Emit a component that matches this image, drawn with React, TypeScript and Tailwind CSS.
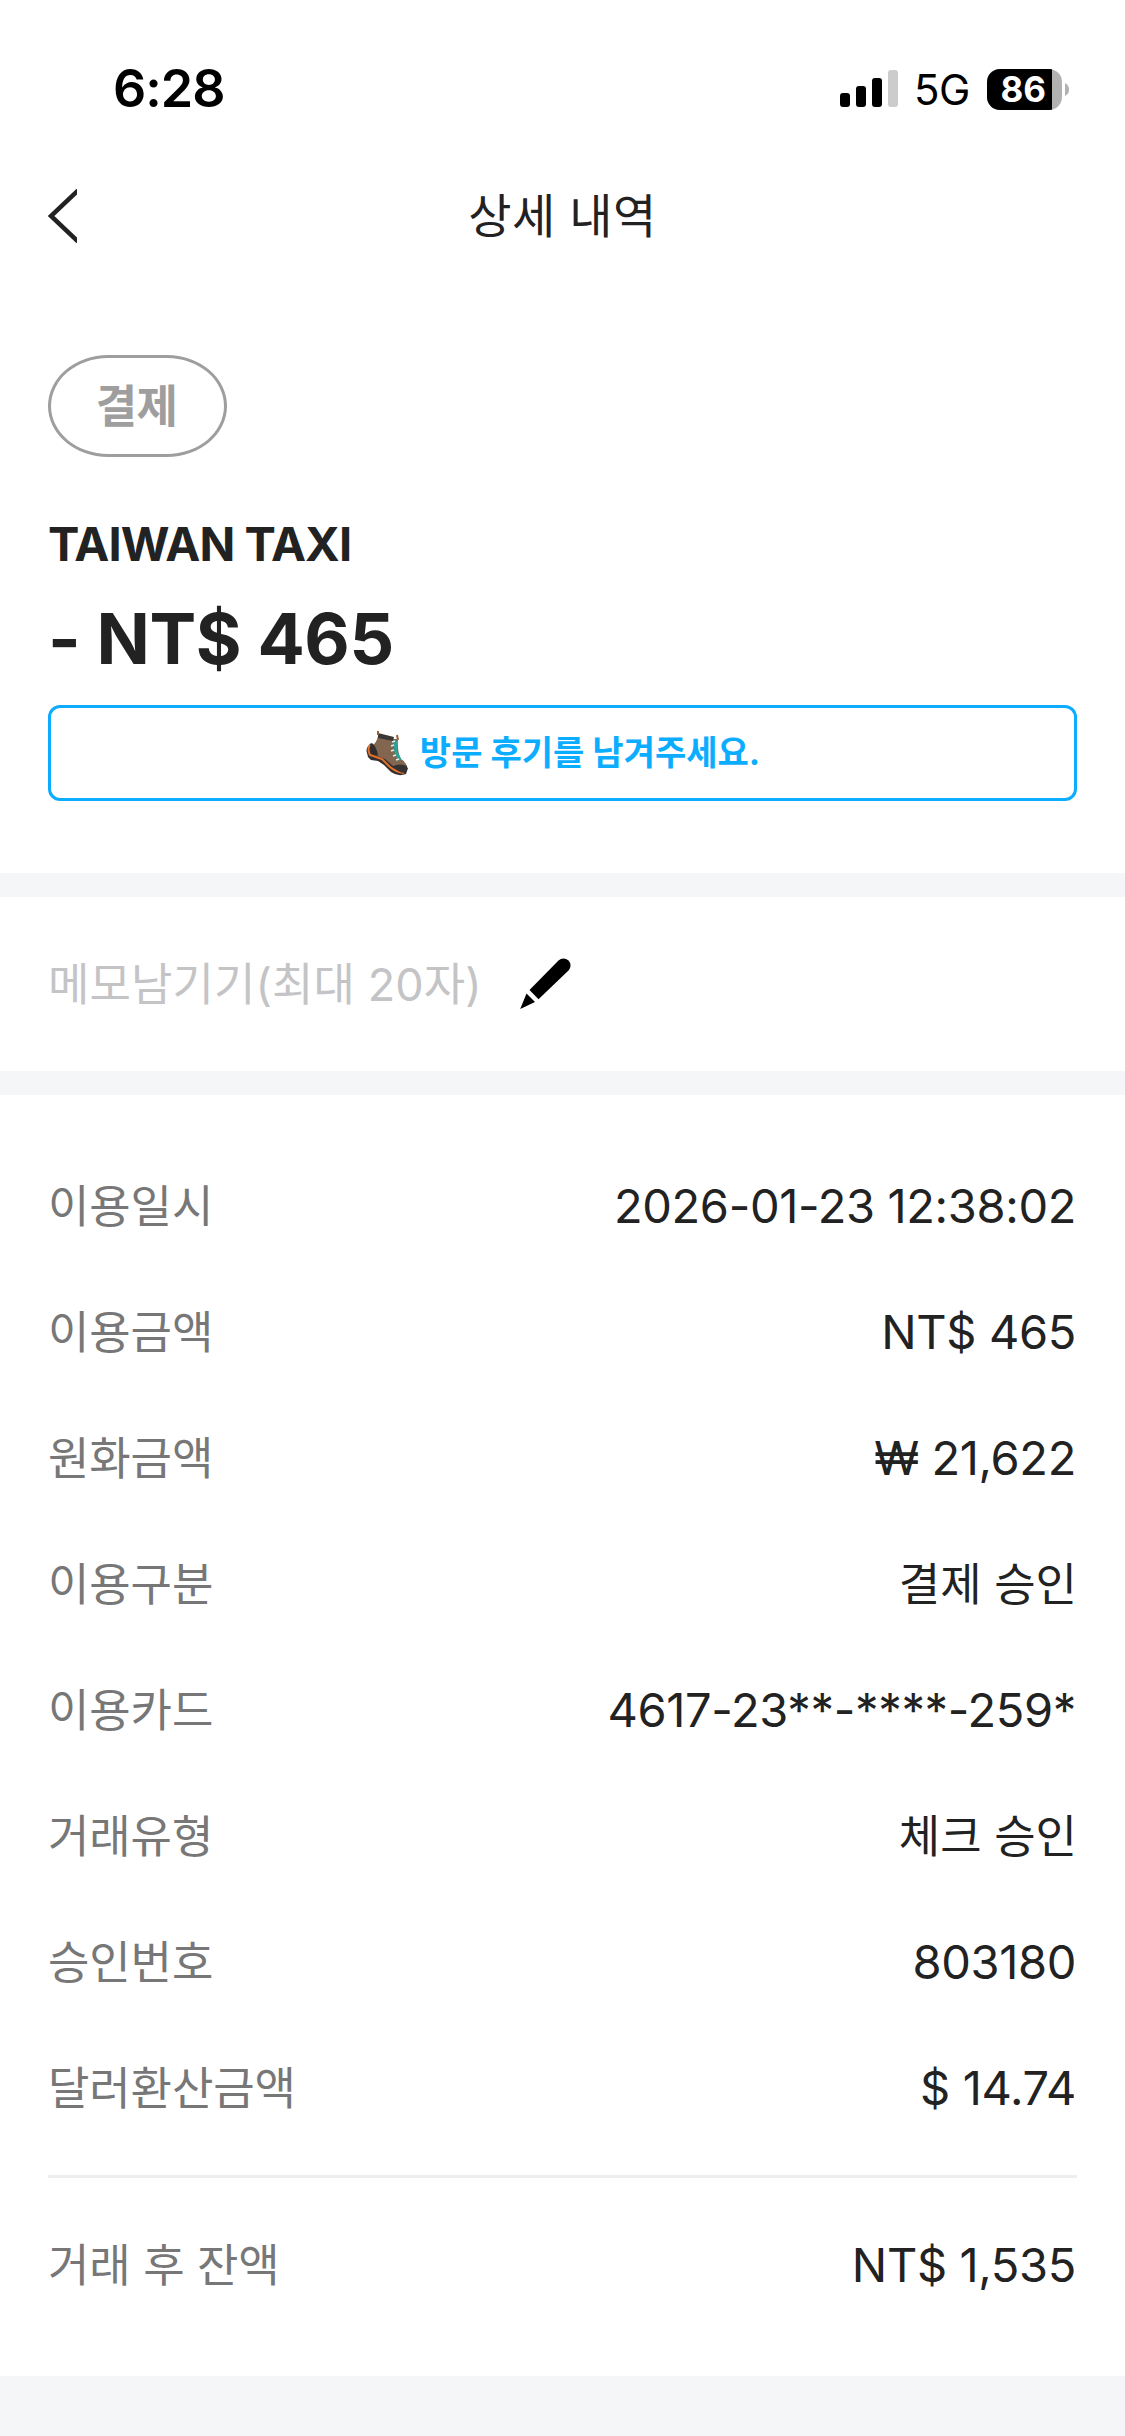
const rows: [string, string][] = [
  ['이용일시', '2026-01-23 12:38:02'],
  ['이용금액', 'NT$ 465'],
  ['원화금액', '₩ 21,622'],
  ['이용구분', '결제 승인'],
  ['이용카드', '4617-23**-****-259*'],
  ['거래유형', '체크 승인'],
  ['승인번호', '803180'],
  ['달러환산금액', '$ 14.74'],
]

function Row({ label, value }: { label: string; value: string }) {
  const hangul = /[가-힣]/.test(value)
  return (
    <div className="flex h-[126px] items-center justify-between leading-none">
      <span className="pb-[2px] text-[45px] tracking-[-0.1px] text-[#777]">{label}</span>
      <span className={hangul ? 'pb-[2px] text-[45px] text-[#222]' : 'pr-[1px] pb-[4px] text-[47px] tracking-[-0.35px] text-[#222]'}>{value}</span>
    </div>
  )
}

function Boot() {
  return (
    <svg width="42" height="46" viewBox="0 0 42 46">
      <path d="M5 13 Q-1 18 1 23 L2 27 L5 30 L12 31 L18 35 L25 42 Q32 47 40 44 L42 38 L20 25Z" fill="#33302f" />
      <path d="M4 15 Q1 19 4 25 L16 29 L24 37 Q30 42 38 43" fill="none" stroke="#e8702a" strokeWidth="2" />
      <path d="M12 6 Q11 12 6 16 Q5 23 11 26 L19 29 L27 36 L41 36 Q38 30 35 29 Q31 22 32 9 L25 9Z" fill="#836650" />
      <path d="M6 13 Q11 17 12 26 L7 24 Q2 18 6 13Z" fill="#2f2c2b" />
      <path d="M12 3 L28 7 L27 11 L12 8Z" fill="#3a3735" />
      <path d="M12 1 L12 5 M31 5 L32 10" stroke="#9a6038" strokeWidth="2" />
      <path d="M27 36 Q34 33 41 36 Q42 41 39 43 Q32 43 27 36Z" fill="#353230" />
      <path d="M29 10 L30 22 L34 30" fill="none" stroke="#25a59c" strokeWidth="3" />
      <path d="M26 12 L29 11 M25 16 L28 15 M25 21 L28 20 M27 26 L30 25 M30 30 L33 29" stroke="#e3efec" strokeWidth="1.5" />
    </svg>
  )
}

function StatusIcons() {
  return (
    <div className="flex items-center text-black">
      <svg width="58" height="38" viewBox="0 0 58 38">
        <rect x="0" y="23" width="10" height="14" rx="3" />
        <rect x="16" y="16" width="10" height="21" rx="3" />
        <rect x="32" y="8" width="10" height="29" rx="3" />
        <rect x="48" y="0" width="10" height="37" rx="3" fill="#ccc" />
      </svg>
      <span className="ml-[16px] w-[55px] pt-[2px] text-[42px] leading-none tracking-[-0.5px]">5G</span>
      <div className="ml-[18px] flex h-[41px] w-[75px] items-center overflow-hidden rounded-[13px] bg-[#b2b2b2]">
        <span className="flex h-full w-[65px] items-center justify-end bg-black pr-[6px] text-[35px] leading-none font-bold text-white">86</span>
      </div>
      <svg className="ml-[3px]" width="4" height="13" viewBox="0 0 4 13">
        <path d="M0 0 Q4 2 4 6.500 Q4 11 0 13Z" fill="#b2b2b2" />
      </svg>
    </div>
  )
}

export default function App() {
  return (
    <div className="flex h-[2436px] w-[1125px] flex-col bg-white font-[Inter,'Noto_Sans_CJK_KR',sans-serif] text-[#222]">
      <header className="flex h-[144px] items-center justify-between pt-[34px] pr-[56px] pl-[113px]">
        <span className="text-[52px] leading-none font-semibold tracking-[-1px] text-black">6:28</span>
        <StatusIcons />
      </header>
      <nav className="grid h-[144px] grid-cols-3 items-center px-12 text-[47px] leading-none">
        <svg width="29" height="54" viewBox="0 0 29 54" fill="none" stroke="#222" strokeWidth="4.500">
          <path d="M30 1.500 L3 27 L30 52.500" />
        </svg>
        <span className="pb-[2px] text-center tracking-[0.5px]">상세 내역</span>
      </nav>
      <section className="flex h-[585px] flex-col px-12 pt-[67px]">
        <div className="flex h-[102px] w-[179px] items-center justify-center rounded-[60px/51px] border-3 border-[#9e9e9e] pr-[2px] text-[45px] leading-none font-bold tracking-[-0.6px] text-[#9e9e9e]">결제</div>
        <div className="mt-[51px] h-[72px] text-[47px] leading-[72px] font-bold tracking-[-0.9px]">TAIWAN TAXI</div>
        <div className="mt-[5px] h-[108px] text-[70px] leading-[108px] font-bold tracking-[-0.4px]">- NT$ 465</div>
        <div className="mt-[12px] flex h-[96px] items-center justify-center gap-3 rounded-xl border-3 border-[#0cadff] pl-[1px] text-[34px] leading-none font-bold text-[#0cadff]"><Boot />방문 후기를 남겨주세요.</div>
      </section>
      <div className="h-6 bg-[#f4f6f8]" />
      <div className="flex h-[174px] items-center gap-[38px] px-12 text-[#c4c4c6]">
        <span className="w-[432px] text-[45px] leading-none tracking-[0.1px] whitespace-nowrap">메모남기기(최대 20자)</span>
        <svg width="54" height="54" viewBox="0 0 54 54">
          <path d="M11.500 33 L40.500 3.600 A6.700 6.700 0 0 1 50.500 13.500 L20.500 42.300Z" fill="#000" />
          <path d="M2.200 52 L8.500 36.500 L17 45Z" fill="#000" />
        </svg>
      </div>
      <div className="h-6 bg-[#f4f6f8]" />
      <section className="flex h-[1281px] flex-col px-12 pt-[49px]">
        {rows.map(([l, v]) => <Row key={l} label={l} value={v} />)}
        <div className="mt-[23px] mb-[25px] h-[3px] bg-[#eee]" />
        <Row label="거래 후 잔액" value="NT$ 1,535" />
      </section>
      <div className="flex-1 bg-[#f4f6f8]" />
    </div>
  )
}
